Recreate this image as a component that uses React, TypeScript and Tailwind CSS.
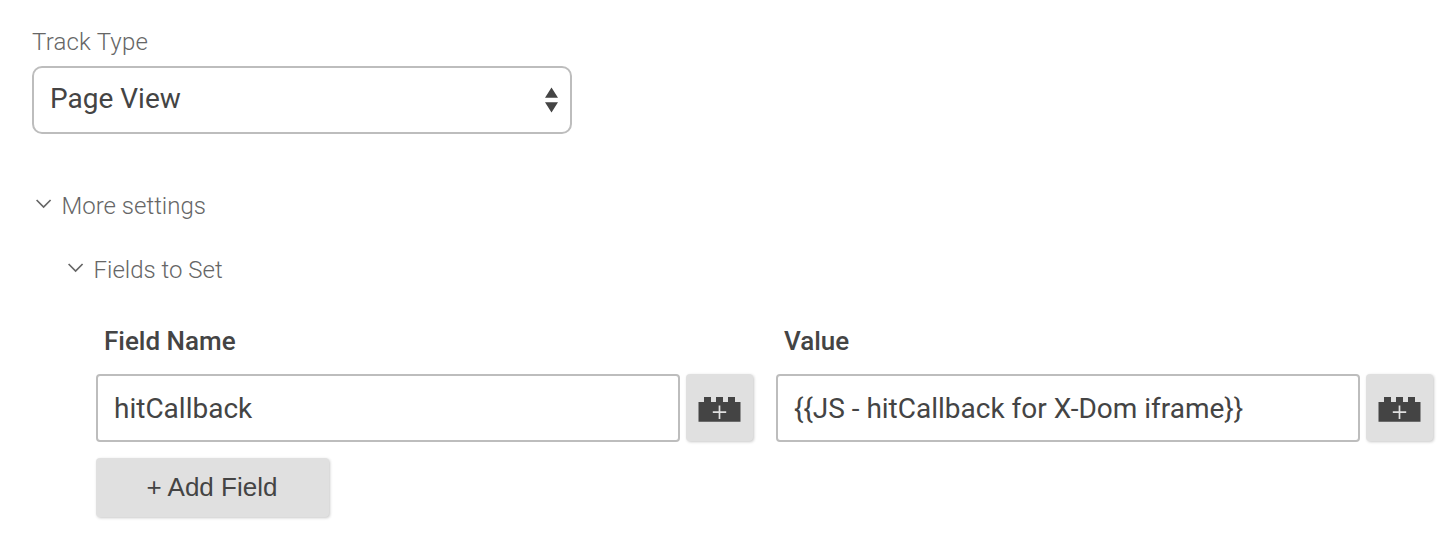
import React from "react";

function Chevron() {
  return (
    <svg width="16" height="10" viewBox="0 0 16 10" className="mb-1 shrink-0" fill="none" stroke="#666" strokeWidth="1.7">
      <path d="M0.6 1 L7.6 8 L14.6 1" />
    </svg>
  );
}

function BrickButton() {
  return (
    <button className="flex h-[67px] w-[67px] shrink-0 items-center justify-center rounded-[4px] bg-[#e0e0e0] pt-1 shadow-[1px_1px_3px_rgba(0,0,0,0.22)]">
      <svg width="43" height="25" viewBox="0 0 43 25">
        <path d="M0.5 5H6V0H13V5H18V0H25V5H30V0H37V5H42.5V24.7H0.5Z" fill="#444" />
        <path d="M21.5 8.5V22M14.8 15.2H28.2" stroke="#e0e0e0" strokeWidth="1.7" />
      </svg>
    </button>
  );
}

function Field({ label, value }: { label: string; value: string }) {
  return (
    <div className="w-[658px]">
      <div className="h-[50px] pl-2 text-[26px] font-medium leading-[34px] text-[#444]">{label}</div>
      <div className="flex gap-1.5">
        <div className="flex h-[68px] w-[584px] items-center rounded-[4px] border-2 border-[#bdbdbd] pl-4 pt-0.5 text-[28px] text-[#444]">
          <span>{value}</span>
        </div>
        <BrickButton />
      </div>
    </div>
  );
}

export default function App() {
  return (
    <main className="h-[542px] w-[1450px] overflow-hidden bg-white pl-8 pt-[26px] font-['Roboto',sans-serif] text-[#444]">
      <div className="h-10 text-[24px] font-light leading-8 tracking-[0.2px] text-[#666]">Track Type</div>
      <div className="flex h-[68px] w-[540px] items-center justify-between rounded-[10px] border-2 border-[#bdbdbd] pl-4 pr-3 text-[28px]">
        <span className="pb-0.5">Page View</span>
        <svg width="13" height="26" viewBox="0 0 13 26" fill="#444"><path d="M6.5 0.5L13 10.7H0ZM0 15.3H13L6.5 25.5Z" /></svg>
      </div>
      <div className="mt-14 flex h-8 items-center gap-[9.5px] pl-1 text-[24px] font-light text-[#666]"><Chevron />More settings</div>
      <div className="mt-8 flex h-8 items-center gap-[9.5px] pl-9 text-[24px] font-light text-[#666]"><Chevron />Fields to Set</div>
      <div className="ml-16 mt-[38px] flex gap-[22px]">
        <Field label="Field Name" value="hitCallback" />
        <Field label="Value" value="{{JS - hitCallback for X-Dom iframe}}" />
      </div>
      <button className="ml-16 mt-4 h-[59px] w-[233px] rounded-[4px] bg-[#e0e0e0] pr-px font-['Liberation_Sans',sans-serif] text-[26px] shadow-[1px_1px_3px_rgba(0,0,0,0.22)]">+ Add Field</button>
    </main>
  );
}
